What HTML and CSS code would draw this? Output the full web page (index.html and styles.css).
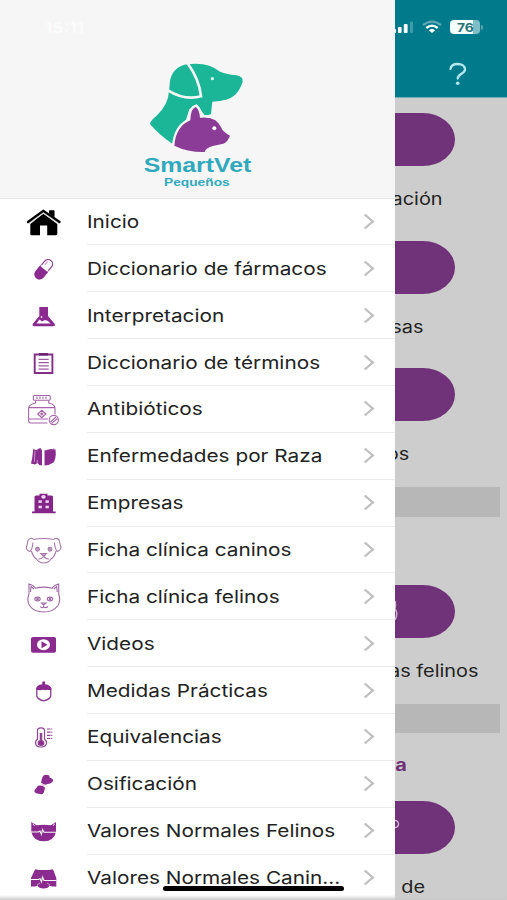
FILE: index.html
```html
<!DOCTYPE html>
<html lang="es">
<head>
<meta charset="utf-8">
<title>SmartVet Pequeños</title>
<link rel="stylesheet" href="styles.css">
</head>
<body>
<div class="screen">
  <main class="page">
    <header class="topbar">
      <div class="status">
        <svg class="signal" width="22" height="14" viewBox="0 0 22 14"><g fill="#fff"><rect x="0" y="9" width="3" height="4" rx="1"/><rect x="5" y="7" width="3.6" height="6" rx="1"/><rect x="10.8" y="4" width="3.8" height="9" rx="1"/><rect x="17" y="1.5" width="3" height="11.5" rx="1" opacity=".25"/></g></svg>
        <svg class="wifi" width="20" height="14" viewBox="0 0 20 14" fill="none" stroke="#fff" stroke-width="2.3"><path d="M1 5.2Q10-2 19 5.2" opacity=".35"/><path d="M4.3 8Q10 3.2 15.7 8"/><path d="M6.8 10.2Q10 8 13.2 10.2L10 13Z" fill="#fff" stroke="none"/></svg>
        <div class="battery"><span>76</span></div><i class="cap"></i>
      </div>
      <div class="help"><svg width="20" height="24" viewBox="0 0 20 24" fill="none" stroke="#b5e6ed" stroke-width="2.3" stroke-linecap="round"><path d="M2.500 6.800C3 3.500 6 2 9.700 2C14 2 17 4.200 17 7.500C17 12 9.700 11.500 9.700 16.500"/><circle cx="9.700" cy="21.300" r="1.800" fill="#b5e6ed" stroke="none"/></svg></div>
    </header>
    <section class="tile"><div class="pill"></div><p class="label l1"><span>ación</span></p></section>
    <section class="tile"><div class="pill"></div><p class="label l2"><span>sas</span></p></section>
    <section class="tile"><div class="pill"></div><p class="label l3"><span>os</span></p></section>
    <div class="bar"></div>
    <section class="tile after-bar"><div class="pill"><svg width="4" height="22" viewBox="0 0 4 22"><path d="M0 1Q1 4 0 9Q3.500 13 0 20" fill="none" stroke="#d4b4d5" stroke-width="1.500"/></svg></div><p class="label l4"><span>as felinos</span></p></section>
    <div class="bar"></div>
    <h2 class="group"><span>a</span></h2>
    <section class="tile last"><div class="pill"><svg width="5" height="22" viewBox="0 0 5 22"><circle cx="0" cy="7" r="3.500" fill="none" stroke="#d4b4d5" stroke-width="1.500"/></svg></div><p class="label l5"><span>n de</span></p></section>
  </main>

  <aside class="drawer">
    <header class="brand">
      <div class="clock"><span>15:11</span></div>
      <svg class="logo" width="140" height="145" viewBox="0 0 420 435">
        <path fill="#1bb698" d="M180 42Q235 36 270 65Q285 72 320 76Q340 80 338 95Q330 120 315 135Q295 153 247 155L243 193L225 197L200 162L178 178L166 216L127 281Q86 254 60 222Q61 212 79 198Q115 165 117 124L120 93Q128 51 171 43Z"/>
        <path fill="none" stroke="#f6f6f6" stroke-width="8" d="M172 38Q208 88 213 139Q163 152 114 121"/>
        <circle cx="247" cy="86" r="5" fill="#d9fff4"/>
        <path fill="#8b3c96" stroke="#f6f6f6" stroke-width="14" paint-order="stroke" stroke-linejoin="round" d="M133 287Q138 228 181 211Q182 174 198 171Q209 182 210 203Q259 197 274 233Q277 244 300 257Q292 277 280 281L248 288Q225 295 224 306Q174 307 133 287Z"/>
        <circle cx="253" cy="235" r="6" fill="#fff"/>
        <text x="41" y="365" class="name" textLength="323" lengthAdjust="spacingAndGlyphs">SmartVet</text>
        <text x="102" y="409" class="sub" textLength="197" lengthAdjust="spacingAndGlyphs">Pequeños</text>
      </svg>
    </header>
    <nav class="menu">
      <a class="row"><svg class="icon" viewBox="0 0 40 40"><path fill="#000" d="M7.300 22L20.300 11.500L34.300 22V32Q34.300 33.300 33 33.300H24.200V23.500H17V33.300H8.600Q7.300 33.300 7.300 32ZM26 8.500H31.300V16L26 12Z"/><path d="M5 20.800L20.300 9.500L36.600 20.800" fill="none" stroke="#ddd" stroke-width="3.600"/><path d="M5 20L20.300 8.800L36.600 20" fill="none" stroke="#000" stroke-width="2.200" stroke-linecap="round"/><path d="M26.500 8.500H31.300V15L26.500 12Z"/></svg><span class="text"><b>Inicio</b></span></a>
      <a class="row"><svg class="icon" viewBox="0 0 40 40"><g transform="rotate(40 20.800 20.200)"><rect x="16.300" y="9" width="9" height="22" rx="4.500" fill="#fff" stroke="#8f3a93" stroke-width="1.200"/><path fill="#8b2a8f" d="M15.700 20H25.900V27A5.100 5.100 0 0 1 15.700 27Z"/><path d="M16 19H26" stroke="#fff"/><path d="M18.800 12V16" stroke="#c08ac3"/></g></svg><span class="text"><b>Diccionario de fármacos</b></span></a>
      <a class="row"><svg class="icon" viewBox="0 0 40 40"><path fill="#8b2a8f" d="M16.300 11H25V20L31.800 28Q32.500 30.200 30 30.200H11.300Q9 30 9.700 28L16.300 20Z"/><path fill="#fff" d="M13.500 27.500L16.500 23.500L19 25.500L22 24L25 25L27.500 27.500Z"/><circle cx="18.500" cy="21" r="1" fill="#e8cbea"/></svg><span class="text"><b>Interpretacion</b></span></a>
      <a class="row"><svg class="icon" viewBox="0 0 40 40"><path fill="#fff" stroke="#823087" stroke-width="1.900" d="M11.700 11.500H29.400V30H11.700Z"/><path d="M16 11.300H25" stroke="#6e2574" stroke-width="2.600"/><path d="M15.500 16.300H25.700M15.500 19.600H25.700M15.500 22.900H25.700M15.500 26.200H25.700" stroke="#9d5ca1" stroke-width="1.200"/></svg><span class="text"><b>Diccionario de términos</b></span></a>
      <a class="row"><svg class="icon" viewBox="0 0 40 40" fill="none" stroke="#a565a9" stroke-width="1.100"><rect x="10.300" y="6.500" width="17" height="4.700" rx="1.200"/><path d="M14 7.500V10M17 7.500V10M20 7.500V10M23 7.500V10M12.500 11.500V14Q6 15.500 5.600 19V31.500Q5.600 34 8 34H24.500M25.700 11.500V14Q32 15.500 32 19V25.500M5.600 18.600H32M5.600 30H25"/><path d="M18.800 21.300L22.800 25L18.800 28.700L14.800 25ZM18.800 23.500V26.500M17.300 25H20.300" stroke-width="1.300"/><circle cx="30.800" cy="31" r="4.600"/><path d="M27.500 33L33 28M28.700 34.300L34.500 29.500"/></svg><span class="text"><b>Antibióticos</b></span></a>
      <a class="row"><svg class="icon" viewBox="0 0 40 40"><path fill="#8b2a8f" d="M10.200 13L13 14.200L17 12Q19.500 13 19 18V29.600Q16 29.500 14.500 27L12 28.500L8 27.500Q9.500 22 9.800 17ZM21.500 14.500L28 13L32.500 13.500Q33.500 22 30.500 26.500Q27 29 21.500 29.500Z"/><path d="M12 15L11.300 26M14.500 24L14 27M30 12L33 14" stroke="#d5a8d8" stroke-width=".8"/></svg><span class="text"><b>Enfermedades por Raza</b></span></a>
      <a class="row"><svg class="icon" viewBox="0 0 40 40"><path fill="#852489" d="M9 28.500H11.500V14Q11.500 12.500 13 12.500H16.500V10.700H24.500V12.500H28.500Q30 12.500 30 14V28.500H32.700V30.300H9Z"/><g fill="#ecd5ee"><rect x="15.500" y="17.300" width="3.300" height="2.600"/><rect x="22.500" y="17.300" width="3.300" height="2.600"/><rect x="15.500" y="22.700" width="3.300" height="2.600"/><rect x="22.500" y="22.700" width="3.300" height="2.600"/><ellipse cx="20.500" cy="13.800" rx="2.200" ry="1.900"/></g></svg><span class="text"><b>Empresas</b></span></a>
      <a class="row"><svg class="icon" viewBox="0 0 40 40" fill="none" stroke="#a678a9" stroke-width="1.100"><path d="M10.500 9.500Q20.500 7.500 31 9.500M10.500 9Q7 7 5 10.500Q4.500 14 3.300 17.500Q3.500 20.500 7 21.500Q9.500 19 10 12.500M31 9Q34 7 36.300 10.500Q37 14 38 17.500Q37.500 20.500 34.300 21.500Q32 19 31.300 12.500M8.500 21Q10 27 13.500 29Q16 33 20.700 33Q25.500 33 28 29Q31.500 27 33 21M15.500 29Q18 29.500 20.700 26.500Q23.500 29.500 26 29"/><path d="M17.800 23.500H23.500L20.700 26.500Z" fill="#cda4d1"/><circle cx="14.500" cy="19.300" r="1.900" fill="#bda0c0"/><circle cx="27" cy="19.300" r="1.900" fill="#bda0c0"/></svg><span class="text"><b>Ficha clínica caninos</b></span></a>
      <a class="row"><svg class="icon" viewBox="0 0 40 40" fill="none" stroke="#9f6aa4" stroke-width="1.100"><path d="M6 17V7Q10.500 8 12.500 11.300Q20.500 9 29 11.300Q31 8 35.700 7V17Q38 23 35 28.500Q30 35 20.800 35Q11 35 6.500 28.500Q3.500 23 6 17ZM7.500 15L8 9.500L11 12M34.200 15L33.700 9.500L30.700 12"/><ellipse cx="14.500" cy="22" rx="2.700" ry="1.900"/><ellipse cx="27" cy="22" rx="2.700" ry="1.900"/><circle cx="14.500" cy="22" r=".8" fill="#795080"/><circle cx="27" cy="22" r=".8" fill="#795080"/><path d="M18.500 26H23L20.700 28ZM20.700 28V30M17 29.500Q19 31.700 20.700 29.800Q22.500 31.700 25 29.500"/></svg><span class="text"><b>Ficha clínica felinos</b></span></a>
      <a class="row"><svg class="icon" viewBox="0 0 40 40"><rect x="8" y="13" width="25" height="15.700" rx="2" fill="#8b2a8f"/><ellipse cx="20.500" cy="20.700" rx="6.500" ry="5.500" fill="#fff"/><path fill="#8b2a8f" d="M18.500 17.300L24.500 20.700L18.500 24.200Z"/></svg><span class="text"><b>Videos</b></span></a>
      <a class="row"><svg class="icon" viewBox="0 0 40 40"><path d="M13.800 18V25Q14.500 28.500 20.700 29.800Q27 28.500 27.700 25V18Z" fill="#fff" stroke="#8c3d91" stroke-width="1.300"/><path fill="#8b2a8f" d="M19.300 10.500H22V13.300Q28.500 14 28.500 18.500Q25 19.500 24 18.300Q22 20 20.500 18.300Q17 20 13 18.500Q13 14 19.300 13.300Z"/></svg><span class="text"><b>Medidas Prácticas</b></span></a>
      <a class="row"><svg class="icon" viewBox="0 0 40 40" fill="none" stroke="#8f4394" stroke-width="1.200"><path d="M14.500 22V13.500Q14.500 10.800 18 10.800Q21.500 10.800 21.500 13.500V22Q23.600 24 23.600 26Q23 30 18 30Q12.800 30 12.500 26Q12.500 24 14.500 22Z"/><path d="M18 16V25" stroke-width="2.500"/><ellipse cx="18" cy="26" rx="2.800" ry="2.300" fill="#8b2a8f"/><path d="M24 12H29.300M24 15.200H29.300M24 18.400H29.300M24 21.500H29.300" stroke-dasharray="3.500 .7"/></svg><span class="text"><b>Equivalencias</b></span></a>
      <a class="row"><svg class="icon" viewBox="0 0 40 40"><path fill="#8b2a8f" d="M18 18.500L19.500 13Q21 10 24.500 11Q27 11 26.500 13.500Q31 15 30 17Q28 20 24.500 20Q21.500 21.800 18 18.500ZM15 21.800Q19 20.500 22 23.500L21 28Q20 31 17 30L13 29.300Q10 27.500 12.500 25Z"/><path d="M18.500 21L22 20.800" stroke="#d6abd9" stroke-width="1.200"/></svg><span class="text"><b>Osificación</b></span></a>
      <a class="row"><svg class="icon" viewBox="0 0 40 40"><path fill="#8b2a8f" d="M8.300 11L13.500 14.300Q20.500 13 28 14.300L33 11V21Q31 30.300 20.700 30.300Q10.500 30.300 8.300 21Z"/><path d="M9.700 13L11.500 14.500M31.800 13L30 14.500" stroke="#fff"/><path fill="none" stroke="#fff" stroke-width="1.100" d="M8 21H15.500L17 20L18.500 23.500L19.500 18.500L21 21.300H33"/></svg><span class="text"><b>Valores Normales Felinos</b></span></a>
      <a class="row"><svg class="icon" viewBox="0 0 40 40"><path fill="#8b2a8f" d="M11.500 12.500Q12.500 10.500 15 12H27Q29.500 10.500 30.500 12.500L33.300 20V28.500H29L26.500 27.500Q25.500 30.500 20.700 30.500Q15.500 30.500 14.500 27.500L12 28.500H8V20Z"/><path fill="none" stroke="#fff" stroke-width="1.100" d="M8 21.500H15.500L17 20.500L18.500 24L19.500 19L21 22.500H33.300"/><path d="M14 27L17 25M27 27L24 25" stroke="#e4c8e6" stroke-width=".7"/></svg><span class="text"><b>Valores Normales Canin...</b></span></a>
    </nav>
  </aside>
  <div class="home-indicator"></div>
  <div class="bottom-edge"></div>
</div>
</body>
</html>
```

FILE: styles.css
```css
* { box-sizing: border-box; }
body { margin: 0; font-family: Inter, "Liberation Sans", sans-serif; color: #222; }
.screen { position: relative; width: 507px; height: 900px; overflow: hidden; background: #cdcdcd; }

.page { display: flex; flex-direction: column; height: 900px; }
.topbar { flex: none; height: 98px; background: #017a8b; border-bottom: 1px solid #6dafb9; display: flex; flex-direction: column; }
.status { display: flex; align-items: center; justify-content: flex-end; height: 54px; padding-right: 24px; }
.signal { margin-right: 7px; }
.wifi { margin-right: 8px; }
.battery { display: flex; align-items: center; justify-content: center; width: 30px; height: 14px; border-radius: 4px; background: linear-gradient(90deg, #f4ffff 78%, #80bec7 78%); color: #28717b; font-size: 12px; font-weight: 700; }
.battery span { transform: scaleX(1.15); }
.cap { width: 2px; height: 5px; margin-left: 1px; border-radius: 0 2px 2px 0; background: #5aa6b0; }
.help { display: flex; justify-content: flex-end; padding: 8px 39px 0 0; }

.tile { flex: none; height: 127.7px; padding-top: 15px; }
.pill { display: flex; align-items: center; width: 120px; height: 53px; margin-left: 335px; padding-left: 60px; border-radius: 32px / 26.5px; background: #703278; }
.label { display: flex; justify-content: flex-end; margin: 21px 0 0; height: 24px; line-height: 24px; font-size: 17px; font-weight: 440; }
.label span, .group span { transform: scaleX(1.17); transform-origin: right; white-space: pre; }
.l1 { padding-right: 64px; }
.l2 { padding-right: 84px; }
.l3 { padding-right: 98px; }
.l4 { padding-right: 29px; }
.l5 { padding-right: 82px; }
.bar { flex: none; height: 29.5px; margin: 6px 7px 0 0; background: #b7b7b7; }
.after-bar { padding-top: 68px; height: 181px; }
.group { flex: none; display: flex; justify-content: flex-end; margin: 20px 100px 0 0; height: 24px; line-height: 24px; font-size: 17px; font-weight: 700; color: #703278; }
.last { padding-top: 24px; }

.drawer { position: absolute; left: 0; top: 0; width: 395px; height: 900px; background: #fff; display: flex; flex-direction: column; }
.brand { flex: none; height: 198.6px; background: #f6f6f6; border-bottom: 1px solid #e6e6e6; }
.clock { height: 50px; padding: 18px 0 0 45px; color: #fbfbfb; font-size: 15px; font-weight: 700; line-height: 19px; }
.clock span { display: inline-block; transform: scaleX(1.15); transform-origin: left; }
.logo { display: block; margin-left: 130px; }
.name { font: 700 60px "Liberation Sans", sans-serif; fill: #31a9bd; }
.sub { font: 700 35px "Liberation Sans", sans-serif; fill: #31a9bd; }

.menu { display: flex; flex-direction: column; }
.row { flex: none; display: flex; align-items: center; height: 46.86px; padding-left: 23px; }
.icon { flex: none; width: 40px; height: 40px; margin-right: 24px; }
.text { flex: 1; display: flex; align-items: center; justify-content: space-between; height: 100%; padding: 0 22px 0 0; border-bottom: 1px solid #ececec; }
.text b { font-size: 17.5px; font-weight: 400; white-space: nowrap; transform: scaleX(1.187); transform-origin: left; }
.text::after { content: ""; width: 9px; height: 9px; margin-right: 2px; border-top: 2px solid #c0c0c0; border-right: 2px solid #c0c0c0; transform: scaleX(1.15) rotate(45deg); }

.home-indicator { position: absolute; left: 163px; top: 886px; width: 181px; height: 5px; border-radius: 3px; background: #000; }
.bottom-edge { position: absolute; left: 0; right: 0; bottom: 0; height: 5px; background: linear-gradient(rgba(205,205,205,0), #cbcbcb); }
```
